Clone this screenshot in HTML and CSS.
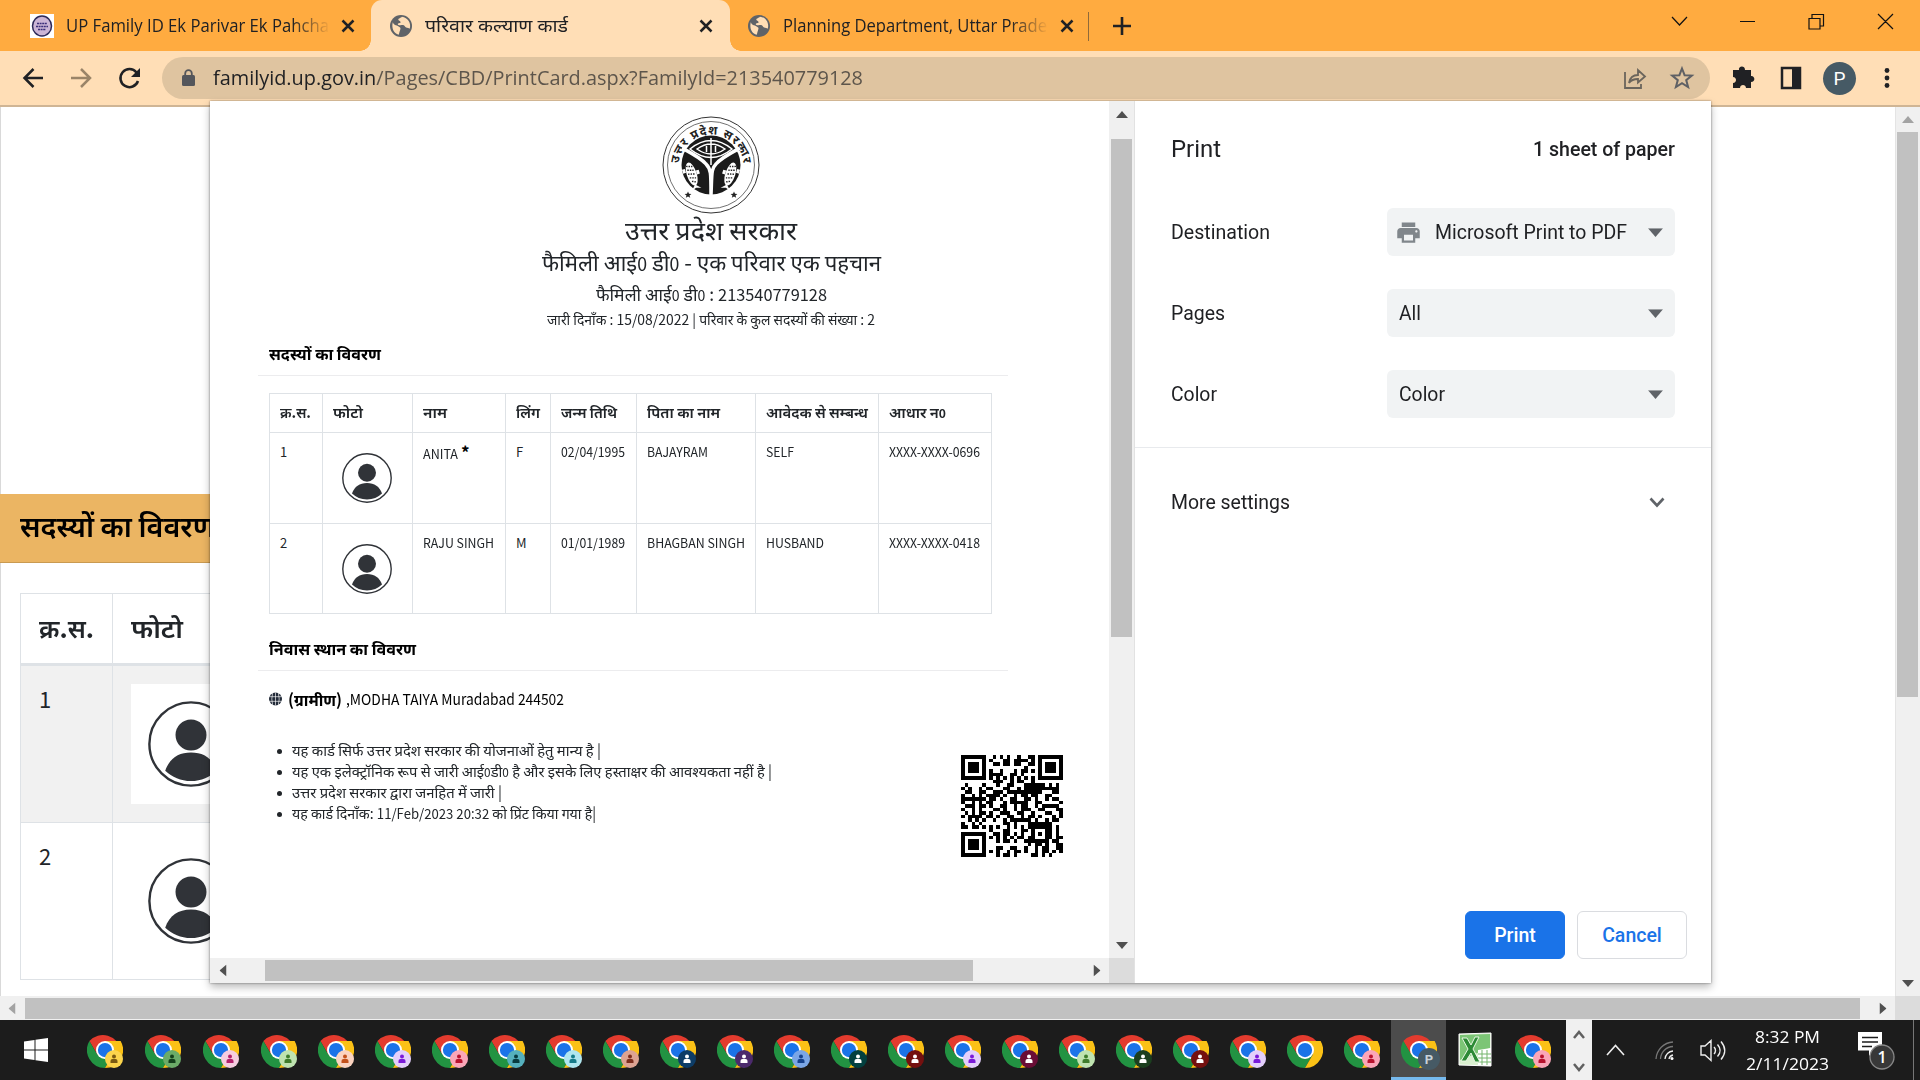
FILE: index.html
```html
<!DOCTYPE html>
<html lang="hi">
<head>
<meta charset="utf-8">
<title>परिवार कल्याण कार्ड</title>
<link rel="stylesheet" href="styles.css">
</head>
<body>
<svg class="defs" aria-hidden="true">
  <symbol id="avatar" viewBox="0 0 100 100">
    <circle cx="50" cy="50" r="48.4" fill="#fff" stroke="#303338" stroke-width="2.8"/>
    <circle cx="50" cy="39.5" r="18" fill="#303338"/>
    <path d="M20 81C25 67 35 60 50 60s25 7 30 21c-8 7.500-18 12-30 12s-22-4.500-30-12z" fill="#303338"/>
  </symbol>
  <symbol id="chrome" viewBox="0 0 48 48">
    <path d="M24 24H44.800A24 24 0 0 0 3.200 12L13.600 30z" fill="#e33b2e"/>
    <path d="M13.600 30L3.200 12A24 24 0 0 0 24 48L34.400 30L24 24z" fill="#229342"/>
    <path d="M24 24L34.400 30L24 48A24 24 0 0 0 44.800 12H24z" fill="#fbc116"/>
    <circle cx="24" cy="24" r="12" fill="#fff"/>
    <circle cx="24" cy="24" r="9.500" fill="#1a73e8"/>
  </symbol>
  <symbol id="globe" viewBox="0 0 24 24">
    <circle cx="12" cy="12" r="12" fill="#5f6368"/>
    <path d="M3 8c1 3 3 3 4.500 3.500S10 13 11 13.500s0 3-.5 4.500-.5 2.500-1 3.500C4 20 1.500 14.500 3 8zM13 1.800c-1 1.500-4 1.500-4 3.200s2.500 1 2.500 2.800-3 .7-3 2.200S12 11 14 11s2 2 3.500 2.500 3 .5 4 1.500c2-6-2-12.500-8.500-13.200z" fill="#ffdeb6"/>
  </symbol>
  <symbol id="x" viewBox="0 0 14 14"><path d="M1.500 1.500l11 11M12.500 1.500l-11 11" stroke="#202124" stroke-width="2.500"/></symbol>
  <symbol id="tri" viewBox="0 0 12 7"><path d="M0 7L6 0L12 7z" fill="currentColor"/></symbol>
</svg>

<header class="tabs">
  <div class="tab t1">
    <svg width="24" height="24" viewBox="0 0 24 24"><path d="M0 0h24v24H0z" fill="#fff"/><ellipse cx="12" cy="12" rx="9.500" ry="10" fill="#cbb5d6" stroke="#2d2a5a" stroke-width="1.500"/><path d="M7 9.500h10M6 12.500h12M8 15.500h8" stroke="#3b2f7a" stroke-width="1.600" stroke-dasharray="2 .6"/></svg>
    <span class="label fade"><span data-w="263">UP Family ID Ek Parivar Ek Pahcha</span></span>
    <svg width="14" height="14"><use href="#x"/></svg>
  </div>
  <div class="tab t2">
    <svg width="22" height="22"><use href="#globe"/></svg>
    <span class="label"><span data-w="143">परिवार कल्याण कार्ड</span></span>
    <svg width="14" height="14"><use href="#x"/></svg>
  </div>
  <div class="tab t3">
    <svg width="22" height="22"><use href="#globe"/></svg>
    <span class="label fade"><span data-w="264">Planning Department, Uttar Prade</span></span>
    <svg width="14" height="14"><use href="#x"/></svg>
  </div>
  <svg class="plus" width="18" height="18" viewBox="0 0 18 18"><path d="M9 0v18M0 9h18" stroke="#202124" stroke-width="2.600"/></svg>
  <svg class="win" width="222" height="18" viewBox="0 0 222 18" fill="none" stroke="#111" stroke-width="1.200"><path d="M1 4l7.500 8L16 4M69 8.500h15M138 5.500h11V16h-11zM141 5V1.500h11.500V13H149M207 1l15 15M222 1l-15 15"/></svg>
</header>

<nav class="toolbar">
  <svg class="nav" width="122" height="24" viewBox="0 0 122 24" fill="none" stroke-width="2.500">
    <path d="M22 12H4M12.500 3l-9 9 9 9" stroke="#202124"/>
    <path d="M50 12h18M60 3l9 9-9 9" stroke="#9a8468"/>
    <path d="M115.500 6.500A9 9 0 1 0 117 15" stroke="#202124"/><path d="M119 2v9h-9z" fill="#202124"/>
  </svg>
  <div class="omnibox">
    <svg width="14" height="18" viewBox="0 0 14 18"><rect y="6" width="13" height="11" rx="1.500" fill="#54565b"/><path d="M3.200 7V4.500a3.300 3.300 0 0 1 6.600 0V7" fill="none" stroke="#54565b" stroke-width="1.800"/></svg>
    <span class="url"><span data-w="650">familyid.up.gov.in<i>/Pages/CBD/PrintCard.aspx?FamilyId=213540779128</i></span></span>
    <svg class="share" width="24" height="24" viewBox="0 0 24 24" fill="none" stroke="#6b655c" stroke-width="1.800"><path d="M2 6v16h16v-4M6 17c1-6 4-8 9-8V4l7 6.500-7 6V13c-4 0-7 1-9 4z"/></svg>
    <svg width="24" height="24" viewBox="0 0 24 24"><path d="M12 2.500l2.600 6.700 7.200.4-5.600 4.500 1.900 7L12 17.200l-6.100 3.900 1.900-7-5.600-4.500 7.200-.4z" fill="none" stroke="#5f6064" stroke-width="2"/></svg>
  </div>
  <svg class="tools" width="158" height="34" viewBox="0 0 158 34">
    <path d="M1 9h6c-1-4 6-5 6 0h6v6c4-.5 5 6 0 6v6h-5c0-4-6-4-6 0H1v-5c4 0 4-6 0-6z" fill="#202124"/>
    <path d="M50 7h18v20H50z" fill="none" stroke="#202124" stroke-width="2.500"/><path d="M60 7h8v20h-8z" fill="#202124"/>
    <circle cx="107.500" cy="17.500" r="16.500" fill="#465a65"/><text x="107.500" y="24" text-anchor="middle" class="pf">P</text>
    <g fill="#202124"><circle cx="155" cy="9.500" r="2.400"/><circle cx="155" cy="17" r="2.400"/><circle cx="155" cy="24.500" r="2.400"/></g>
  </svg>
</nav>

<main class="viewport">
  <div class="page">
    <h2 class="band"><span data-w="195">सदस्यों का विवरण</span></h2>
    <div class="gtable">
      <div class="c head"><span data-w="55">क्र.स.</span></div><div class="c head"><span data-w="52">फोटो</span></div>
      <div class="c odd">1</div><div class="c odd cpic"><div class="pic"><svg width="86" height="86"><use href="#avatar"/></svg></div></div>
      <div class="c">2</div><div class="c cpic"><div class="pic"><svg width="86" height="86"><use href="#avatar"/></svg></div></div>
    </div>
  </div>
  <div class="vbar"><svg width="12" height="7"><use href="#tri"/></svg><b></b><svg class="down" width="12" height="7"><use href="#tri"/></svg></div>
</main>
<div class="hbar"><svg class="left" width="12" height="7"><use href="#tri"/></svg><b></b><svg class="right" width="12" height="7"><use href="#tri"/></svg><i></i></div>

<footer class="taskbar">
  <svg class="start" width="24" height="24" viewBox="0 0 24 24" fill="#fff"><path d="M0 3.500L10.500 2v9.400H0zM11.500 1.800L24 0v11.400H11.500zM0 12.500h10.500V22L0 20.500zM11.500 12.500H24V24l-12.500-1.800z"/></svg>
  <div id="apps"></div>
  <div class="spin"><svg width="12" height="9" viewBox="0 0 12 9"><path d="M1 8l5-6 5 6" fill="none" stroke="#606060" stroke-width="2.500"/></svg><svg class="down" width="12" height="9" viewBox="0 0 12 9"><path d="M1 8l5-6 5 6" fill="none" stroke="#606060" stroke-width="2.500"/></svg></div>
  <svg class="tray" width="120" height="26" viewBox="0 0 120 26" fill="none" stroke="#eee" stroke-width="1.600">
    <path d="M1 18l8.500-9.500L18 18"/>
    <g stroke="#777" stroke-width="1.300"><path d="M50 22a18 18 0 0 1 17-17M54.500 22a13 13 0 0 1 12.500-12.500"/></g><path d="M59 22a8.500 8.500 0 0 1 8-8M63 22a5 5 0 0 1 4-4" stroke-width="1.300"/><circle cx="66" cy="21.500" r="1.500" fill="#fff" stroke="none"/>
    <path d="M95 9h4l6-5.500v20L99 18h-4zM108 10c2 2 2 5 0 7M111.500 7.500c3.500 4 3.500 8 0 12M115 4.500c5 6 5 12 0 18" stroke-width="1.400"/>
  </svg>
  <div class="clock"><span data-w="65">8:32 PM</span><span data-w="83">2/11/2023</span></div>
  <svg class="note" width="38" height="38" viewBox="0 0 38 38"><path d="M1 0h24v18.500H17L12 24V18.500H1z" fill="#fff"/><path d="M5 5.500h16M5 10h16M5 14.500h10" stroke="#1c1c1c" stroke-width="1.500"/><circle cx="25" cy="25" r="12" fill="#383838" stroke="#888" stroke-width="1.300"/><text x="25" y="31" text-anchor="middle" class="n1">1</text></svg>
</footer>

<section class="dialog">
  <div class="preview">
    <div class="doc">
      <svg class="seal" width="98" height="98" viewBox="-49 -49 98 98">
        <g fill="none" stroke="#333"><circle r="48" stroke-width="1"/><circle r="43.500" stroke-width=".7"/></g>
        <path id="arc" d="M-32.500 2A32.500 32.500 0 0 1 32.500 2" fill="none"/>
        <text class="sealtext"><textPath href="#arc" startOffset="50%" text-anchor="middle" textLength="95">उत्तर प्रदेश सरकार</textPath></text>
        <circle r="29.500" fill="#1b1b1b"/>
        <path d="M-29 -17C-18 -11-10-7-5-1C0 4 0 8 0 30M29 -17C18-11 10-7 5-1C0 4 1 8 0 30" fill="none" stroke="#fff" stroke-width="3.500"/>
        <path d="M-21-16Q0-33 21-16Q0 1-21-16zM-14-16Q0-26 14-16Q0-6-14-16zM0-27V0" fill="none" stroke="#fff" stroke-width="1.500"/>
        <path d="M-4.500-19v6M4.500-19v6" stroke="#fff" stroke-width="1.500"/>
        <g id="fish" transform="rotate(-18 -19 10)"><ellipse cx="-19" cy="9" rx="5" ry="12" fill="#fff"/><path d="M-24 2h-3v4h3M-14 7h3v4h-3M-19 20l-5 5 5-1.500 5 1.500z" fill="#fff"/><path d="M-22 0l6 2M-22 4l6 2M-22.500 8l7 2M-22 12l6 2M-21 16l4 2" stroke="#222" stroke-width="1.400" stroke-dasharray="1.500 1"/></g>
        <use href="#fish" transform="scale(-1 1)"/>
        <path d="M-23 26.500l1 2.300 2.400.1-1.900 1.500.7 2.400-2.200-1.400-2.200 1.400.7-2.400-1.900-1.500 2.400-.1zM23 26.500l1 2.300 2.400.1-1.900 1.500.7 2.400-2.200-1.400-2.200 1.400.7-2.400-1.900-1.500 2.400-.1z" fill="#222"/>
      </svg>
      <h1 class="l1"><span data-w="172">उत्तर प्रदेश सरकार</span></h1>
      <div class="l2"><span data-w="339">फैमिली आई<small>0</small> डी<small>0</small> - एक परिवार एक पहचान</span></div>
      <div class="l3"><span data-w="231">फैमिली आई<small>0</small> डी<small>0</small> : <small class="num">213540779128</small></span></div>
      <div class="l4"><span data-w="328">जारी दिनाँक : 15/08/2022 | परिवार के कुल सदस्यों की संख्या : 2</span></div>
      <h3><span data-w="112">सदस्यों का विवरण</span></h3>
      <table class="members">
        <colgroup><col class="k1"><col class="k2"><col class="k3"><col class="k4"><col class="k5"><col class="k6"><col class="k7"><col class="k8"></colgroup>
        <tr><th><span data-w="31">क्र.स.</span></th><th><span data-w="30">फोटो</span></th><th><span data-w="24">नाम</span></th><th><span data-w="24">लिंग</span></th><th><span data-w="56">जन्म तिथि</span></th><th><span data-w="73">पिता का नाम</span></th><th><span data-w="102">आवेदक से सम्बन्ध</span></th><th><span data-w="57">आधार न<small>0</small></span></th></tr>
        <tr><td>1</td><td class="av"><svg width="50" height="50"><use href="#avatar"/></svg></td><td class="st"><span data-w="35">ANITA</span><b>*</b></td><td>F</td><td><span data-w="64">02/04/1995</span></td><td><span data-w="61">BAJAYRAM</span></td><td><span data-w="28">SELF</span></td><td><span data-w="91">XXXX-XXXX-0696</span></td></tr>
        <tr><td>2</td><td class="av"><svg width="50" height="50"><use href="#avatar"/></svg></td><td><span data-w="71">RAJU SINGH</span></td><td>M</td><td><span data-w="64">01/01/1989</span></td><td><span data-w="98">BHAGBAN SINGH</span></td><td><span data-w="58">HUSBAND</span></td><td><span data-w="91">XXXX-XXXX-0418</span></td></tr>
      </table>
      <h3 class="h3b"><span data-w="147">निवास स्थान का विवरण</span></h3>
      <div class="addr"><svg width="13" height="14" viewBox="0 0 14 14"><circle cx="7" cy="7" r="7" fill="#222a38"/><path d="M0 4.500h14M0 9.500h14M7 0v14M4 0q-2 7 0 14M10 0q2 7 0 14" fill="none" stroke="#fff" stroke-width=".7"/></svg><b><span data-w="54">(ग्रामीण)</span></b><span data-w="218">,MODHA TAIYA Muradabad 244502</span></div>
      <div class="bottom">
        <ul>
          <li><span data-w="309">यह कार्ड सिर्फ उत्तर प्रदेश सरकार की योजनाओं हेतु मान्य है |</span></li>
          <li><span data-w="480">यह एक इलेक्ट्रॉनिक रूप से जारी आई<small>0</small>डी<small>0</small> है और इसके लिए हस्ताक्षर की आवश्यकता नहीं है |</span></li>
          <li><span data-w="210">उत्तर प्रदेश सरकार द्वारा जनहित में जारी |</span></li>
          <li><span data-w="304">यह कार्ड दिनाँक: <small class="num">11/Feb/2023 20:32</small> को प्रिंट किया गया है|</span></li>
        </ul>
        <svg id="qr" width="102" height="102" viewBox="0 0 29 29" shape-rendering="crispEdges"></svg>
      </div>
    </div>
    <div class="vbar"><svg width="12" height="7"><use href="#tri"/></svg><b></b><svg class="down" width="12" height="7"><use href="#tri"/></svg></div>
    <div class="hbar"><svg class="left" width="12" height="7"><use href="#tri"/></svg><b></b><svg class="right" width="12" height="7"><use href="#tri"/></svg><i></i></div>
  </div>
  <aside class="side">
    <div class="shead"><span data-w="50">Print</span><strong data-w="142">1 sheet of paper</strong></div>
    <div class="row"><span data-w="99">Destination</span><div class="sel"><svg class="pr" width="27" height="27" viewBox="0 0 24 24" fill="#80868b"><path d="M19 8H5c-1.660 0-3 1.340-3 3v6h4v4h12v-4h4v-6c0-1.660-1.340-3-3-3zm-3 11H8v-5h8v5zm3-7c-.55 0-1-.45-1-1s.45-1 1-1 1 .45 1 1-.45 1-1 1zM18 3H6v4h12V3z"/></svg><span data-w="192">Microsoft Print to PDF</span><svg class="down ar" width="15" height="9" viewBox="0 0 12 7"><use href="#tri"/></svg></div></div>
    <div class="row"><span data-w="54">Pages</span><div class="sel"><span data-w="22">All</span><svg class="down ar" width="15" height="9" viewBox="0 0 12 7"><use href="#tri"/></svg></div></div>
    <div class="row"><span data-w="46">Color</span><div class="sel"><span data-w="46">Color</span><svg class="down ar" width="15" height="9" viewBox="0 0 12 7"><use href="#tri"/></svg></div></div>
    <div class="more"><span data-w="119">More settings</span><svg width="16" height="11" viewBox="0 0 16 11"><path d="M1.500 1.500L8 8.500l6.500-7" fill="none" stroke="#5f6368" stroke-width="2.600"/></svg></div>
    <div class="btns"><button class="ok">Print</button><button>Cancel</button></div>
  </aside>
</section>
<script src="app.js"></script>
</body>
</html>
```
FILE: styles.css
```css
* { box-sizing: border-box; }
body { margin: 0; width: 1920px; height: 1080px; overflow: hidden; position: relative; display: flex; flex-direction: column; background: #fff; color: #212529; font-family: "Noto Sans CJK SC", "Noto Sans", sans-serif; }
svg { display: block; flex: none; overflow: visible; }
.defs { position: absolute; width: 0; height: 0; }
[data-w] { display: inline-block; white-space: nowrap; transform-origin: 0 50%; flex: none; }

.tabs { height: 51px; background: #ffab40; display: flex; align-items: center; font: 18px/26px "Open Sans", "Noto Sans", sans-serif; color: #202124; flex: none; }
.tab { display: flex; align-items: center; height: 51px; }
.label { height: 26px; flex: 1; white-space: nowrap; margin-top: -1px; }
.fade { mask-image: linear-gradient(90deg, #000 86%, rgba(0,0,0,.04)); }
.t1 { width: 371px; padding: 0 16px 0 30px; gap: 12px; }
.t2 { width: 359px; background: #ffdeb6; border-radius: 11px 11px 0 0; padding: 0 17px 0 19px; gap: 13px; position: relative; }
.t2::before, .t2::after { content: ""; position: absolute; bottom: 0; width: 11px; height: 11px; }
.t2::before { left: -11px; background: radial-gradient(circle at 0 0, transparent 10.5px, #ffdeb6 11px); }
.t2::after { right: -11px; background: radial-gradient(circle at 100% 0, transparent 10.5px, #ffdeb6 11px); }
.t3 { width: 341px; padding-left: 18px; gap: 13px; position: relative; }
.t3::after { content: ""; position: absolute; right: -18px; top: 12px; width: 1px; height: 29px; background: #8f6a3a; }
.plus { margin-left: 42px; }
.win { margin: -8px 27px 0 auto; }

.toolbar { height: 56px; background: #ffdeb6; border-bottom: 2px solid #cfb595; display: flex; align-items: center; padding: 0 30px 0 21px; flex: none; }
.nav { margin-right: 19px; }
.omnibox { width: 1548px; height: 42px; border-radius: 21px; background: #dfc4a0; display: flex; align-items: center; padding: 0 16px 0 20px; }
.url { margin-left: 17px; flex: 1; font: 20px/28px "Open Sans", "Noto Sans", sans-serif; color: #202124; }
.url i { font-style: normal; color: #5d554b; }
.share { margin-right: 23px; }
.tools { margin-left: 22px; }
.pf { font: 19px Roboto, sans-serif; fill: #fff; }

.viewport { height: 889px; display: flex; flex: none; }
.page { flex: 1; border-left: 1px solid #d9d9d9; padding-top: 387px; }
.band { margin: 0 0 0 -1px; width: 1690px; height: 69px; background: #ebb563; border-bottom: 1px solid #c99a51; padding-left: 20px; font-size: 28px; line-height: 62px; color: #000; font-weight: 600; }
.gtable { margin: 30px 0 0 19px; display: grid; grid-template-columns: 92px 150px; grid-template-rows: 72px 157px 157px; font-size: 22px; border-left: 1px solid #dee2e6; border-top: 1px solid #dee2e6; width: 242px; }
.c { border: solid #dee2e6; border-width: 0 1px 1px 0; padding: 14px 0 0 18px; line-height: 36px; }
.head { font-weight: 600; font-size: 25px; border-bottom-width: 3px; padding: 15px 0 0 18px; }
.odd { background: #f1f1f1; }
.cpic { padding-top: 18px; }
.pic { width: 120px; height: 120px; background: #fff; display: grid; place-items: center; }

.vbar { width: 25px; background: #f0f0f0; display: flex; flex-direction: column; align-items: center; color: #505050; padding: 8px 2px 9px; }
.vbar b { background: #c1c1c1; width: 21px; }
.vbar .down { margin-top: auto; }
.viewport .vbar { border-left: 1px solid #e4e4e4; padding-left: 1px; }
.viewport .vbar > svg:first-child { color: #a3a3a3; margin-top: 1px; }
.viewport .vbar b { margin-top: 9px; height: 565px; }
.down { transform: rotate(180deg); }
.left { transform: rotate(-90deg); }
.right { transform: rotate(90deg); }
.hbar { height: 24px; background: #f0f0f0; display: flex; align-items: center; color: #505050; flex: none; }
.hbar > b { height: 21px; background: #c1c1c1; }
body > .hbar > .left { margin: 0 7px 0 6px; color: #a3a3a3; }
body > .hbar > b { width: 1835px; }
body > .hbar > .right { margin: 0 6px 0 17px; }
.hbar > i { width: 25px; align-self: stretch; background: #dcdcdc; margin-left: auto; }

.taskbar { height: 60px; background: #1c1c1c; display: flex; align-items: center; flex: none; }
.start { margin: 0 28px 0 24px; }
#apps { display: flex; width: 1490px; height: 60px; }
.app { width: 57px; height: 60px; display: grid; place-items: center; flex: none; padding-bottom: 1px; }
.app.wide { width: 58px; }
.app.on { background: linear-gradient(#4c4c4c, #4c4c4c) no-repeat 1px 0 / 55px 60px; position: relative; }
.app.on::after { content: ""; position: absolute; left: 1px; bottom: 0; width: 55px; height: 3px; background: #76b9ed; }
.app.xl { width: 55px; }
.app.lastapp { width: 62px; }
.bp { font: bold 13px Roboto, sans-serif; fill: #c7d2d8; }
.spin { width: 26px; height: 60px; background: #f0f0f0; display: flex; flex-direction: column; justify-content: space-between; align-items: center; padding: 10px 0 8px; }
.tray { margin: 0 0 1px 14px; }
.clock { margin-left: 13px; width: 96px; color: #fff; font: 17px/27px "Open Sans", "Noto Sans", sans-serif; display: flex; flex-direction: column; align-items: center; }
.note { margin: 1px 18px 0 22px; }
.taskbar::after { content: ""; width: 1px; height: 60px; background: #777; }
.n1 { font: 600 16px "Open Sans", sans-serif; fill: #fff; }

/* print dialog over the page */
.dialog { position: absolute; left: 210px; top: 101px; width: 1501px; height: 882px; background: #fff; display: flex; box-shadow: 0 0 2px rgba(0,0,0,.45), 0 4px 8px rgba(0,0,0,.28); }
.preview { width: 925px; height: 882px; display: grid; grid-template: 857px 25px / 899px 25px; border-right: 1px solid #e2e2e2; }
.preview .hbar { grid-column: 1 / 3; height: 25px; }
.preview .left { margin: 0 39px 0 7px; }
.preview .left + b { width: 708px; margin-left: -3px; }
.preview .right { margin-left: auto; }
.preview .hbar > i { margin-left: 6px; }
.preview .vbar { padding-top: 10px; }
.preview .vbar > b { margin-top: 21px; height: 498px; }
.doc { overflow: hidden; padding: 15px 0 0 48px; }
.seal { margin-left: 404px; }
.sealtext { font: bold 12px "Noto Sans", sans-serif; fill: #222; }
.l1, .l2, .l3, .l4 { width: 906px; text-align: center; margin: 0; font-weight: 400; }
.l1 { font-size: 26px; line-height: 29px; height: 32px; }
.l2 { font-size: 22.500px; line-height: 31px; height: 32px; }
.l3 { font-size: 17.500px; line-height: 31px; height: 31px; }
.l4 { font-size: 14px; line-height: 20px; height: 23px; }
small { font-size: .8em; line-height: 1; }
.num { font-size: .93em; }
.doc h3 { margin: 8px 0 0; padding-left: 11px; width: 750px; height: 36px; line-height: 27px; font-size: 16.500px; font-weight: 700; color: #000; border-bottom: 1px solid #ececee; }
.members { margin: 17px 0 0 11px; border-collapse: collapse; table-layout: fixed; width: 723px; font-size: 13px; line-height: 20px; }
.k1 { width: 53px; } .k2 { width: 90px; } .k3 { width: 93px; } .k4 { width: 45px; } .k5 { width: 86px; } .k6 { width: 119px; } .k7 { width: 123px; } .k8 { width: 113px; }
.members th, .members td { border: 1px solid #dee2e6; padding: 0 0 0 10px; text-align: left; vertical-align: top; height: 90.500px; }
.members th { height: 39px; padding-top: 8px; font-weight: 600; font-size: 14.500px; }
.members td { padding-top: 9px; }
.members .av { padding: 20px 0 0 19px; }
.members .st { padding-top: 11px; }
.st b { margin-left: 3px; color: #000; font-size: 17px; line-height: 10px; }
.doc .h3b { margin-top: 21px; }
.addr { margin: 16px 0 0 11px; height: 24px; display: flex; align-items: center; font-size: 15px; line-height: 24px; color: #000; }
.addr b { margin: 0 4px 0 6px; font-size: 16.500px; }
.bottom { display: flex; height: 142px; margin-top: 28px; }
ul { margin: 0; padding: 0 0 0 34px; width: 703px; font-size: 15px; line-height: 21px; list-style: none; }
li { height: 21px; display: flex; align-items: center; }
li::before { content: ""; width: 5px; height: 5px; border-radius: 50%; background: #212529; margin: 4px 10px 0 -15px; }
#qr { margin-top: 16px; }

.side { flex: 1; display: flex; flex-direction: column; padding: 0 36px 24px; font: 19.500px/24px Roboto, sans-serif; color: #202124; }
.shead { display: flex; justify-content: space-between; align-items: center; height: 96px; font-size: 24px; }
.shead strong { font-size: 19.500px; font-weight: 500; position: relative; top: 1px; }
.row { height: 81px; display: flex; align-items: center; justify-content: space-between; }
.row > span, .sel > span { position: relative; top: 1px; }
.shead + .row { height: 70px; margin-bottom: 5px; }
.row .sel { width: 288px; height: 48px; border-radius: 6px; background: #f1f3f4; display: flex; align-items: center; padding: 0 12px; }
.ar { margin-left: auto; color: #5f6368; margin-top: 1px; }
.pr { margin: 0 13px 0 -4px; }
.more { margin: 13px -36px 0; border-top: 1px solid #e8eaed; height: 110px; padding: 0 46px 0 36px; display: flex; justify-content: space-between; align-items: center; }
.btns { display: flex; gap: 12px; margin: auto -12px 0 auto; }
button { width: 110px; height: 48px; border-radius: 6px; border: 1px solid #dadce0; background: #fff; color: #1a73e8; font: 500 19.500px Roboto, sans-serif; }
.ok { width: 100px; background: #1a73e8; color: #fff; border-color: #1a73e8; }
```
FILE: app.js
```js
document.querySelectorAll('[data-w]').forEach(el => {
  const w = +el.dataset.w, n = el.getBoundingClientRect().width;
  el.style.transform = `scaleX(${w / n})`;
  el.style.marginRight = `${w - n}px`;
});

// Taskbar windows: [badge colour, person colour]
const apps = [
  ['#fbd44c', '#7a5a12'], ['#6bab68', '#14401c'], ['#f6cde0', '#b3206a'], ['#bfe3b0', '#3f7d2b'],
  ['#fbd3c0', '#c4511b'], ['#e3cffb', '#7a19d8'], ['#fba6b8', '#b8122e'], ['#55b0bd', '#083b40'],
  ['#b0e6ef', '#167b89'], ['#dda392', '#7c2d1c'], ['#0d3c66', '#fff'], ['#4b2a6c', '#fff'],
  ['#7ba6e6', '#15418c'], ['#03403f', '#fff'], ['#74100f', '#fff'], ['#e3cffb', '#7a19d8'],
  ['#6a0d36', '#fff'], ['#bfe3b0', '#3f7d2b'], ['#1c3f1f', '#fff'], ['#74100f', '#fff'],
  ['#e3cffb', '#7a19d8'], null, ['#fba6b8', '#b8122e'], 'P', 'X', ['#fba6b8', '#b8122e']
];
const chrome = '<use href="#chrome" width="36" height="36"/>';
document.getElementById('apps').innerHTML = apps.map((a, i) => {
  let cls = i < 3 ? ' wide' : '', body = chrome;
  if (a === 'P') { cls = ' on'; body += '<circle cx="28" cy="27" r="11" fill="#465a65"/><text class="bp" x="28" y="32" text-anchor="middle">P</text>'; }
  else if (a === 'X') { cls = ' xl'; body = '<path d="M2 2l32-1v33l-32-1z" fill="#d9efcf" stroke="#fff"/><path d="M3 3l30-1v14l-30 12z" fill="#7cc576"/><path d="M21 18l13-2v18l-13-1z" fill="#fff"/><path d="M21 22h13M21 26h13M21 30h13M25 18v15M30 18v15" stroke="#74b56d"/><path d="M5 6h5l4 7 4-8h4l-6 12 7 13h-5l-4-9-5 8H4l7-12z" fill="#2c8a35" stroke="#e9f7e4"/>'; }
  else if (a) body += `<circle cx="27" cy="27" r="9" fill="${a[0]}"/><circle cx="27" cy="24.500" r="2" fill="${a[1]}"/><path d="M23.500 31v-2q0-2 2-2h3q2 0 2 2v2z" fill="${a[1]}"/>`;
  if (i === apps.length - 1) cls = ' lastapp';
  return `<div class="app${cls}"><svg width="36" height="36">${body}</svg></div>`;
}).join('');

// QR code modules
const N = 29, inEye = (x, y) => [[0, 0], [22, 0], [0, 22]].find(([a, b]) => x >= a - 1 && x < a + 8 && y >= b - 1 && y < b + 8);
let seed = 21354, path = '';
for (let y = 0; y < N; y++) for (let x = 0; x < N; x++) {
  seed = (seed * 1103515245 + 12345) % 2147483648;
  const e = inEye(x, y);
  let on = (seed >> 12) & 1;
  if (e) { const d = Math.max(Math.abs(x - e[0] - 3), Math.abs(y - e[1] - 3)); on = d === 3 || d < 2; }
  else if (x > 19 && x < 25 && y > 19 && y < 25) { const d = Math.max(Math.abs(x - 22), Math.abs(y - 22)); on = d !== 1; }
  else if (x === 6 || y === 6) on = (x + y) % 2 === 0;
  if (on) path += `M${x} ${y}h1v1h-1z`;
}
document.getElementById('qr').innerHTML = `<path d="${path}"/>`;
```
